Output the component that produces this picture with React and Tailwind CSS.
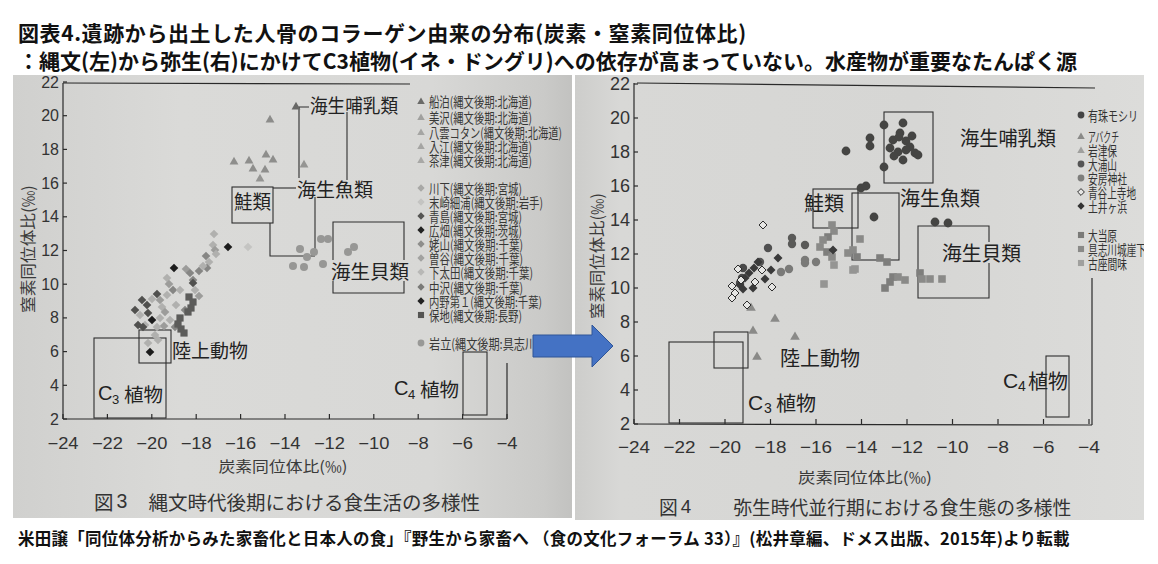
import React from 'react';

const CJK = "'Noto Sans CJK JP', sans-serif";
const NUM = "'Liberation Sans', Arial, sans-serif";

function Marker({ m, x, y, c, s = 1 }) {
  if (m === 'tri')
    return <polygon points={`${x},${y - 4.2 * s} ${x - 4.4 * s},${y + 3.4 * s} ${x + 4.4 * s},${y + 3.4 * s}`} fill={c} />;
  if (m === 'dia')
    return <polygon points={`${x},${y - 4.3 * s} ${x + 4.3 * s},${y} ${x},${y + 4.3 * s} ${x - 4.3 * s},${y}`} fill={c} />;
  if (m === 'odia')
    return (
      <polygon
        points={`${x},${y - 4 * s} ${x + 4 * s},${y} ${x},${y + 4 * s} ${x - 4 * s},${y}`}
        fill="#e6e6e4"
        stroke="#2e2e2e"
        strokeWidth={1}
      />
    );
  if (m === 'sq') return <rect x={x - 3.6 * s} y={y - 3.6 * s} width={7.2 * s} height={7.2 * s} fill={c} />;
  return <circle cx={x} cy={y} r={4 * s} fill={c} />;
}

function T({ x, y, w, size = 18, children, anchor = 'start', fill = '#222', font = CJK }) {
  return (
    <text
      x={x}
      y={y}
      fontSize={size}
      fontFamily={font}
      fill={fill}
      textAnchor={anchor}
      dominantBaseline="central"
      {...(w ? { textLength: w, lengthAdjust: 'spacingAndGlyphs' } : {})}
    >
      {children}
    </text>
  );
}

const XVALS = [-24, -22, -20, -18, -16, -14, -12, -10, -8, -6, -4];
const YVALS = [22, 20, 18, 16, 14, 12, 10, 8, 6, 4, 2];

/* ---------------- left chart data ---------------- */
const lx = (v) => 63 + (v + 24) * 22.2;
const ly = (v) => 419 - (v - 2) * 16.85;

const L = '#b0b0ae';
const LM = '#9c9c9a';
const M = '#868684';
const D = '#50504e';
const K = '#1c1c1c';
const VL = '#c4c4c2';

const leftTri = [
  [296, 106, '#686866'], [270, 119, '#8c8c8a'], [234, 161, '#8e8e8c'], [249, 160, '#8e8e8c'],
  [253, 168, '#8e8e8c'], [266, 154, '#8e8e8c'], [273, 159, '#8e8e8c'], [265, 169, '#8e8e8c'],
  [260, 178, '#959593'], [304, 164, '#959593'],
];
const leftCirc = [
  [300, 249], [307, 257], [314, 252], [321, 239], [328, 239], [348, 252], [354, 247],
  [293, 266], [304, 267], [323, 264],
];
const leftDia = [
  [214, 234, L], [213, 245, L], [215, 250, LM], [216, 254, L], [228, 247, K], [248, 247, VL],
  [206, 256, M], [209, 262, L], [207, 268, M], [203, 266, L], [199, 271, M], [174, 268, K],
  [186, 269, LM], [190, 273, M], [193, 280, M], [193, 283, D], [195, 290, L], [167, 278, L],
  [169, 284, LM], [173, 290, M], [157, 294, D], [167, 295, L], [152, 299, L], [160, 300, LM],
  [162, 307, L], [135, 310, D], [147, 305, D], [148, 313, D], [140, 315, L], [152, 320, K],
  [145, 325, L], [138, 325, D], [143, 327, D], [160, 318, L], [164, 326, LM], [157, 327, L],
  [175, 327, M], [170, 320, L], [155, 335, L], [158, 340, L], [148, 343, L], [150, 352, K],
  [180, 290, L], [199, 296, LM], [142, 300, D], [185, 310, M], [176, 305, L], [165, 312, LM],
];
const leftSq = [
  [189, 297], [193, 302], [188, 312], [191, 308], [180, 318], [181, 329], [184, 333], [178, 324],
];

const leftLegend = [
  [101, '船泊(縄文後期:北海道)', 'tri', '#6a6a68', 103],
  [117, '美沢(縄文後期:北海道)', 'tri', '#a0a09e', 103],
  [132, '八雲コタン(縄文後期:北海道)', 'tri', '#a5a5a3', 133],
  [146, '入江(縄文後期:北海道)', 'tri', '#a5a5a3', 103],
  [160, '茶津(縄文後期:北海道)', 'tri', '#a8a8a6', 103],
  [188, '川下(縄文後期:宮城)', 'dia', '#a8a8a6', 93],
  [202, '末崎細浦(縄文後期:岩手)', 'dia', '#c4c4c2', 114],
  [216, '青島(縄文後期:宮城)', 'dia', '#555553', 93],
  [230, '広畑(縄文後期:茨城)', 'dia', '#222', 93],
  [244, '姥山(縄文後期:千葉)', 'dia', '#8e8e8c', 94],
  [258, '曽谷(縄文後期:千葉)', 'dia', '#a2a2a0', 94],
  [272, '下太田(縄文後期:千葉)', 'dia', '#b8b8b6', 104],
  [287, '中沢(縄文後期:千葉)', 'dia', '#7a7a78', 94],
  [301, '内野第１(縄文後期:千葉)', 'dia', '#222', 113],
  [315, '保地(縄文後期:長野)', 'sq', '#555553', 93],
  [343, '岩立(縄文後期:具志川島)', 'circ', '#999997', 122],
];

/* ---------------- right chart data ---------------- */
const rx = (v) => 634 + (v + 24) * 22.75;
const ry = (v) => 84 + (22 - v) * 17.0;

const rightDarkCirc = [
  [884, 125], [903, 123], [900, 133], [912, 136], [893, 140], [906, 141], [890, 148], [910, 147],
  [898, 152], [915, 153], [903, 160], [894, 156], [884, 167], [918, 155], [899, 137], [906, 150],
  [846, 151], [870, 138], [870, 146], [861, 188], [866, 186], [874, 217], [935, 222], [948, 223],
];
const rightMidCirc = [
  [792, 238, '#5a5a58'], [792, 244, '#5a5a58'], [805, 245, '#5a5a58'], [768, 248, '#505050'],
  [805, 260, '#7a7a78'], [805, 263, '#7a7a78'], [816, 262, '#7a7a78'], [789, 269, '#7a7a78'],
  [781, 272, '#7a7a78'], [743, 268, '#4a4a4a'], [742, 278, '#4a4a4a'], [740, 283, '#4a4a4a'],
  [760, 262, '#555'],
];
const rightDia = [
  [758, 262], [754, 268], [778, 258], [771, 270], [765, 279], [753, 288], [745, 278], [740, 285],
  [743, 289], [833, 250], [749, 273],
];
const rightODia = [
  [763, 225], [738, 269], [762, 270], [755, 282], [772, 287], [732, 286], [735, 293], [732, 298],
  [747, 305], [741, 280],
];
const rightSq = [
  [832, 225, '#8a8a88'], [834, 231, '#8a8a88'], [828, 237, '#7e7e7c'], [823, 240, '#8a8a88'],
  [820, 247, '#8a8a88'], [827, 252, '#7e7e7c'], [832, 257, '#8a8a88'], [834, 265, '#959593'],
  [853, 270, '#959593'], [860, 239, '#8a8a88'], [853, 250, '#8a8a88'], [857, 257, '#7e7e7c'],
  [848, 253, '#8a8a88'], [824, 284, '#959593'], [880, 258, '#7e7e7c'], [887, 262, '#7e7e7c'],
  [893, 277, '#7e7e7c'], [898, 277, '#8a8a88'], [905, 280, '#8a8a88'], [890, 282, '#7e7e7c'],
  [885, 288, '#7e7e7c'], [920, 273, '#7e7e7c'], [922, 279, '#8a8a88'], [930, 279, '#8a8a88'],
  [942, 279, '#8a8a88'], [855, 269, '#959593'],
];
const rightTri = [
  [751, 307], [775, 318], [753, 330], [795, 336], [757, 356],
];

const rightLegend = [
  [115, '有珠モシリ', 'circ', '#444', 50],
  [136, 'アバクチ', 'tri', '#8a8a88', 31],
  [150, '岩津保', 'tri', '#a0a09e', 29],
  [164, '大浦山', 'circ', '#555', 29],
  [178, '安房神社', 'circ', '#7e7e7c', 39],
  [192, '青谷上寺地', 'odia', '#333', 48],
  [206, '土井ヶ浜', 'dia', '#333', 39],
  [235, '大当原', 'sq', '#7a7a78', 29],
  [249, '具志川城崖下', 'sq', '#8a8a88', 58],
  [263, '古座間味', 'sq', '#a0a09e', 39],
];

function LeftChart() {
  return (
    <svg className="block w-[559px] h-[410px]" viewBox="13 75 559 410">
      <g stroke="#2a2a2a" strokeWidth={1.2} fill="none">
        <line x1={63} y1={83} x2={63} y2={419} />
        <line x1={63} y1={419} x2={507} y2={419} />
        <line x1={63} y1={83} x2={410} y2={84} />
        <line x1={507} y1={363} x2={507} y2={419} />
        {YVALS.map((v) => (
          <line key={v} x1={63} y1={ly(v)} x2={67} y2={ly(v)} />
        ))}
        {XVALS.map((v) => (
          <line key={v} x1={lx(v)} y1={419} x2={lx(v)} y2={414} />
        ))}
      </g>
      {YVALS.map((v) => (
        <T key={v} x={59} y={ly(v)} size={16} anchor="end" font={NUM} fill="#333">
          {v}
        </T>
      ))}
      {XVALS.map((v) => (
        <T key={v} x={lx(v)} y={443} size={16} anchor="middle" font={NUM} fill="#333" w={v <= -10 ? 31 : 21}>
          {'−' + Math.abs(v)}
        </T>
      ))}
      <T x={283} y={465} size={15} anchor="middle" fill="#3a3a3a" w={129}>
        炭素同位体比(‰)
      </T>
      <g transform="translate(27 249) rotate(-90)">
        <T x={0} y={0} size={16} anchor="middle" fill="#3a3a3a" w={128}>
          窒素同位体比(‰)
        </T>
      </g>

      <g stroke="#2e2e2e" strokeWidth={1.1} fill="none">
        <path d="M309,107 H299 V178" />
        <path d="M347,112 V180" />
        <rect x={232} y={187} width={41} height={36} />
        <path d="M273,188 H296" />
        <path d="M315,197 V252" />
        <path d="M270,223 V256 H315" />
        <path d="M333,260 V222 H404 V260 M404,281 V293 H333 V281" />
        <rect x={139} y={330} width={32} height={33} />
        <rect x={94} y={338} width={72} height={80} />
        <rect x={463} y={352} width={24} height={63} />
      </g>

      {leftTri.map(([x, y, c], i) => (
        <Marker key={'t' + i} m="tri" x={x} y={y} c={c} />
      ))}
      {leftCirc.map(([x, y], i) => (
        <Marker key={'c' + i} m="circ" x={x} y={y} c="#979795" />
      ))}
      {leftDia.map(([x, y, c], i) => (
        <Marker key={'d' + i} m="dia" x={x} y={y} c={c} />
      ))}
      {leftSq.map(([x, y], i) => (
        <Marker key={'s' + i} m="sq" x={x} y={y} c="#5c5c5a" />
      ))}

      <T x={310} y={104} size={19} w={88}>海生哺乳類</T>
      <T x={297} y={188} size={19} w={76}>海生魚類</T>
      <T x={234} y={200} size={19} w={37}>鮭類</T>
      <T x={331} y={270} size={19} w={78}>海生貝類</T>
      <T x={172} y={349} size={19} w={76}>陸上動物</T>
      <T x={98} y={393} size={20} font={NUM}>C</T>
      <T x={112} y={399} size={13} font={NUM}>3</T>
      <T x={124} y={393} size={19} w={39}>植物</T>
      <T x={394} y={388} size={20} font={NUM}>C</T>
      <T x={408} y={394} size={13} font={NUM}>4</T>
      <T x={420} y={388} size={19} w={39}>植物</T>

      {leftLegend.map(([y, t, m, c, w]) => (
        <g key={t}>
          <Marker m={m} x={421} y={y} c={c} s={0.85} />
          <T x={429} y={y} size={13.5} w={w} fill="#383836">
            {t}
          </T>
        </g>
      ))}
    </svg>
  );
}

function RightChart() {
  return (
    <svg className="block w-[569px] h-[418px]" viewBox="575 75 569 418">
      <g stroke="#2a2a2a" strokeWidth={1.2} fill="none">
        <line x1={634} y1={83} x2={634} y2={424} />
        <line x1={634} y1={424} x2={1092} y2={425} />
        <line x1={637} y1={83} x2={1095} y2={88} />
        <line x1={1092} y1={278} x2={1092} y2={425} />
        {YVALS.map((v) => (
          <line key={v} x1={634} y1={ry(v)} x2={638} y2={ry(v)} />
        ))}
        {XVALS.map((v) => (
          <line key={v} x1={rx(v)} y1={424} x2={rx(v)} y2={419} />
        ))}
      </g>
      {YVALS.map((v) => (
        <T key={v} x={630} y={ry(v)} size={18} anchor="end" font={NUM} fill="#333">
          {v}
        </T>
      ))}
      {XVALS.map((v) => (
        <T key={v} x={rx(v)} y={447} size={17} anchor="middle" font={NUM} fill="#333" w={v <= -10 ? 32 : 22}>
          {'−' + Math.abs(v)}
        </T>
      ))}
      <T x={865} y={476} size={15} anchor="middle" fill="#3a3a3a" w={134}>
        炭素同位体比(‰)
      </T>
      <g transform="translate(596 256) rotate(-90)">
        <T x={0} y={0} size={16} anchor="middle" fill="#3a3a3a" w={126}>
          窒素同位体比(‰)
        </T>
      </g>

      <g stroke="#2e2e2e" strokeWidth={1.1} fill="none">
        <rect x={884} y={112} width={49} height={71} />
        <rect x={852} y={193} width={47} height={67} />
        <rect x={813} y={189} width={45} height={39} />
        <path d="M989,242 V226 H918 V298 H989 V263" />
        <rect x={714} y={332} width={34} height={36} />
        <rect x={669} y={342} width={74} height={81} />
        <rect x={1046} y={356} width={23} height={61} />
      </g>

      {rightSq.map(([x, y, c], i) => (
        <Marker key={'s' + i} m="sq" x={x} y={y} c={c} s={1.05} />
      ))}
      {rightTri.map(([x, y], i) => (
        <Marker key={'t' + i} m="tri" x={x} y={y} c="#8a8a88" s={1.1} />
      ))}
      {rightMidCirc.map(([x, y, c], i) => (
        <Marker key={'m' + i} m="circ" x={x} y={y} c={c} s={1.05} />
      ))}
      {rightDarkCirc.map(([x, y], i) => (
        <Marker key={'c' + i} m="circ" x={x} y={y} c="#454543" s={1.1} />
      ))}
      {rightDia.map(([x, y], i) => (
        <Marker key={'d' + i} m="dia" x={x} y={y} c="#3a3a3a" s={1.05} />
      ))}
      {rightODia.map(([x, y], i) => (
        <Marker key={'o' + i} m="odia" x={x} y={y} />
      ))}

      <T x={960} y={137} size={20} w={96}>海生哺乳類</T>
      <T x={900} y={197} size={20} w={80}>海生魚類</T>
      <T x={804} y={202} size={20} w={40}>鮭類</T>
      <T x={942} y={252} size={20} w={79}>海生貝類</T>
      <T x={780} y={357} size={20} w={80}>陸上動物</T>
      <T x={748} y={402} size={21} font={NUM}>C</T>
      <T x={764} y={408} size={14} font={NUM}>3</T>
      <T x={776} y={402} size={20} w={40}>植物</T>
      <T x={1003} y={380} size={21} font={NUM}>C</T>
      <T x={1018} y={386} size={14} font={NUM}>4</T>
      <T x={1028} y={380} size={20} w={40}>植物</T>

      {rightLegend.map(([y, t, m, c, w]) => (
        <g key={t}>
          <Marker m={m} x={1081} y={y} c={c} s={0.85} />
          <T x={1088} y={y} size={13.5} w={w} fill="#333">
            {t}
          </T>
        </g>
      ))}
    </svg>
  );
}

export default function App() {
  return (
    <div className="relative w-[1158px] h-[564px] bg-white overflow-hidden font-['Noto_Sans_CJK_JP',sans-serif]">
      <div className="pl-[18px] pt-[18px] font-bold text-[21px] leading-[28px] text-[#111] whitespace-nowrap">
        <div className="tracking-[0.6px]">図表4.遺跡から出土した人骨のコラーゲン由来の分布(炭素・窒素同位体比)</div>
        <div>：縄文(左)から弥生(右)にかけてC3植物(イネ・ドングリ)への依存が高まっていない。水産物が重要なたんぱく源</div>
      </div>

      <div className="flex items-start pl-[13px] mt-[1px] gap-[3px]">
        <div className="flex flex-col w-[559px] h-[443px] bg-[linear-gradient(90deg,#d0d0ce_0%,#dadad8_30%,#d8d8d6_75%,#cacac8_95%,#c2c2c0_100%)]">
          <LeftChart />
          <div className="flex items-center h-[33px] pl-[81px] text-[19.5px] text-[#333] whitespace-nowrap">
            <span>図</span>
            <span className="ml-[3px] font-['Liberation_Sans',sans-serif]">3</span>
            <span className="ml-[21px]">縄文時代後期における食生活の多様性</span>
          </div>
        </div>
        <div className="flex flex-col w-[569px] h-[445px] bg-[linear-gradient(90deg,#cdcdcb_0%,#d8d8d6_8%,#d6d6d4_60%,#dcdcda_100%)]">
          <RightChart />
          <div className="flex items-center h-[27px] pt-[2px] pl-[84px] text-[18.8px] text-[#333] whitespace-nowrap">
            <span>図</span>
            <span className="ml-[3px] font-['Liberation_Sans',sans-serif]">4</span>
            <span className="ml-[42px]">弥生時代並行期における食生態の多様性</span>
          </div>
        </div>
      </div>

      <div className="pl-[18px] mt-[6px] font-bold text-[16.5px] leading-[24px] tracking-[0.25px] text-[#111] whitespace-nowrap">
        米田譲「同位体分析からみた家畜化と日本人の食」『野生から家畜へ （食の文化フォーラム 33）』(松井章編、ドメス出版、2015年)より転載
      </div>

      <svg className="absolute left-[530px] top-[322px]" width="86" height="48" viewBox="0 0 86 48">
        <polygon points="3,13 62,13 62,3 83,24 62,45 62,35 3,35" fill="#4472c4" stroke="#2f5597" strokeWidth="1" />
      </svg>
    </div>
  );
}
